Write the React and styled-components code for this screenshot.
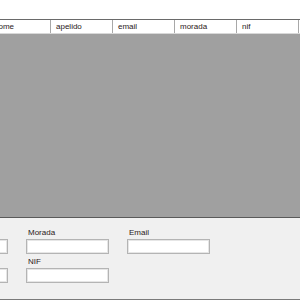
import React from 'react'
import styled, { createGlobalStyle } from 'styled-components'

// page reset //
const Global = createGlobalStyle`
  html, body { margin: 0; padding: 0; background: #f0f0f0; }
  body { font-family: 'Liberation Sans', Arial, sans-serif; }
`

const Window = styled.div`
  width: 300px;
  height: 300px;
  display: flex;
  flex-direction: column;
  overflow: hidden;
  background: #f0f0f0;
`

const TopStrip = styled.div`
  height: 19px;
  background: #ffffff;
  border-bottom: 1px solid #6a6a6a;
`

const Grid = styled.div`
  flex: 1;
  display: flex;
  flex-direction: column;
  background: #a0a0a0;
  border-bottom: 1px solid #5a5a5a;
  overflow: hidden;
`

const HeaderRow = styled.div`
  display: flex;
  height: 13px;
  margin-left: -11px;
  background: #ffffff;
  border-bottom: 1px solid #d8d8d8;
`

const HeaderCell = styled.div`
  flex: 0 0 62px;
  box-sizing: border-box;
  display: flex;
  align-items: center;
  padding-left: 5px;
  border-right: 1px solid #a8a8a8;
  font-size: 8px;
  color: #2a2020;
  white-space: nowrap;
  overflow: hidden;
`

const Form = styled.div`
  height: 82px;
  box-sizing: border-box;
  padding-top: 10px;
  border-bottom: 1px solid #7a7a7a;
`

const Fields = styled.div`
  display: grid;
  grid-template-columns: repeat(3, 83px);
  column-gap: 18px;
  row-gap: 3px;
  margin-left: -75px;
`

const Field = styled.div`
  display: flex;
  flex-direction: column;
`

const Label = styled.label`
  height: 11px;
  line-height: 9px;
  font-size: 8px;
  color: #2a2020;
  padding-left: 2px;
`

const Input = styled.div`
  height: 15px;
  box-sizing: border-box;
  background: #ffffff;
  border: 1px solid #b4b4b4;
  box-shadow: inset 0 0 0 1px #e6e6e6;
`

const columns = ['nome', 'apelido', 'email', 'morada', 'nif']

const App = () => {
  return (
    <>
      <Global />
      <Window>
        <TopStrip />
        <Grid>
          <HeaderRow>
            {columns.map(c => (
              <HeaderCell key={c}>{c}</HeaderCell>
            ))}
          </HeaderRow>
        </Grid>
        <Form>
          <Fields>
            <Field><Label /><Input /></Field>
            <Field><Label>Morada</Label><Input /></Field>
            <Field><Label>Email</Label><Input /></Field>
            <Field><Label /><Input /></Field>
            <Field><Label>NIF</Label><Input /></Field>
          </Fields>
        </Form>
      </Window>
    </>
  )
}

export default App
